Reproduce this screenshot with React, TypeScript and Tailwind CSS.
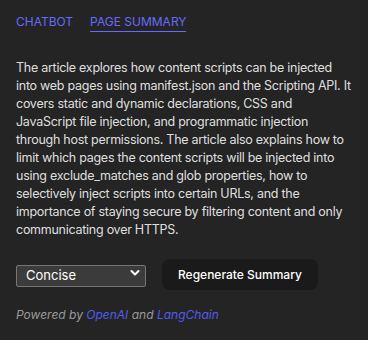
import React, { useState } from 'react';

const App: React.FC = () => {
    const [tab, setTab] = useState<'chat' | 'summary'>('summary');
    const [mode, setMode] = useState('concise');

    return (
        <div className="w-[368px] h-[340px] bg-[#242424] px-4 pt-[13px] font-['Inter',sans-serif] text-[rgba(255,255,255,0.87)] antialiased">
            <div className="flex gap-[17px] text-[12px] leading-[18px] text-[#646cff]">
                <button onClick={() => setTab('chat')} className="border-b border-transparent">
                    CHATBOT
                </button>
                <button onClick={() => setTab('summary')} className={`border-b ${tab === 'summary' ? 'border-[#646cff]' : 'border-transparent'}`}>
                    PAGE SUMMARY
                </button>
            </div>

            <p className="mt-[27px] text-[12.5px] leading-[18px] tracking-[-0.021em]">
                The article explores how content scripts can be injected into web pages using manifest.json and the Scripting API. It covers static and dynamic declarations, CSS and JavaScript file injection, and programmatic injection through host permissions. The article also explains how to limit which pages the content scripts will be injected into using exclude_matches and glob properties, how to selectively inject scripts into certain URLs, and the importance of staying secure by filtering content and only communicating over HTTPS.
            </p>

            <div className="mt-[20px] flex items-center gap-4">
                <div className="relative">
                    <select
                        value={mode}
                        onChange={(e) => setMode(e.target.value)}
                        className="appearance-none w-[130px] h-[22px] bg-[#3b3b3b] border border-[#767676] rounded-[2px] pl-[9px] text-[13px] text-white outline-none"
                    >
                        <option value="concise">Concise</option>
                        <option value="detailed">Detailed</option>
                    </select>
                    <svg className="absolute right-[6px] top-[7px] pointer-events-none" width="10" height="8" viewBox="0 0 10 8" fill="none">
                        <path d="M1.5 2L5 5.5L8.5 2" stroke="white" strokeWidth="2" strokeLinecap="round" strokeLinejoin="round" />
                    </svg>
                </div>
                <button className="h-[31px] px-[16px] rounded-[8px] bg-[#1a1a1a] text-[12px] font-medium text-white">
                    Regenerate Summary
                </button>
            </div>

            <p className="mt-[16px] text-[12px] leading-[18px] italic text-[#9b9b9b]">
                Powered by <a href="#" className="text-[#535bf2]">OpenAI</a> and <a href="#" className="text-[#535bf2]">LangChain</a>
            </p>
        </div>
    );
};

export default App;
